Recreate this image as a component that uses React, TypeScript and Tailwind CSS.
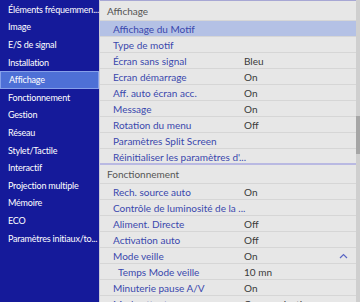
import React from "react";

const left = [
  "Éléments fréquemmen...",
  "Image",
  "E/S de signal",
  "Installation",
  "Affichage",
  "Fonctionnement",
  "Gestion",
  "Réseau",
  "Stylet/Tactile",
  "Interactif",
  "Projection multiple",
  "Mémoire",
  "ECO",
  "Paramètres initiaux/to...",
];

type Row = { l: string; v?: string; hl?: boolean; indent?: boolean; chev?: boolean };

const sec1: Row[] = [
  { l: "Affichage du Motif", hl: true },
  { l: "Type de motif" },
  { l: "Écran sans signal", v: "Bleu" },
  { l: "Ecran démarrage", v: "On" },
  { l: "Aff. auto écran acc.", v: "On" },
  { l: "Message", v: "On" },
  { l: "Rotation du menu", v: "Off" },
  { l: "Paramètres Split Screen" },
  { l: "Réinitialiser les paramètres d'..." },
];

const sec2: Row[] = [
  { l: "Rech. source auto", v: "On" },
  { l: "Contrôle de luminosité de la ..." },
  { l: "Aliment. Directe", v: "Off" },
  { l: "Activation auto", v: "Off" },
  { l: "Mode veille", v: "On", chev: true },
  { l: "Temps Mode veille", v: "10 mn", indent: true },
  { l: "Minuterie pause A/V", v: "On" },
  { l: "Mode attente", v: "Communication..." },
];

function RowItem({ r }: { r: Row }) {
  return (
    <div
      className={`flex items-center h-[16px] border-b border-[#d6d6d6] shrink-0 ${
        r.hl ? "bg-[#b4c1e5]" : ""
      }`}
    >
      <div
        className={`w-[144px] shrink-0 text-[#3a47ad] whitespace-nowrap ${
          r.indent ? "pl-[18px]" : "pl-[13px]"
        }`}
      >
        {r.l}
      </div>
      <div className="flex-1 text-[#3a3a3a] whitespace-nowrap">{r.v}</div>
      {r.chev && (
        <svg width="9" height="6" viewBox="0 0 9 6" className="mr-[8px]">
          <path d="M1 5 L4.5 1.5 L8 5" stroke="#5b67c4" strokeWidth="1.2" fill="none" />
        </svg>
      )}
    </div>
  );
}

export default function App() {
  return (
    <div
      className="w-[360px] h-[302px] flex overflow-hidden text-[10px] leading-[14px]"
      style={{ fontFamily: 'Lato, "Open Sans", sans-serif' }}
    >
      <div className="w-[99px] shrink-0 bg-[#151a9a] pt-[1px] flex flex-col overflow-hidden text-[9px] tracking-[-0.2px]">
        {left.map((t) => (
          <div
            key={t}
            className={`h-[17.6px] shrink-0 flex items-center pl-[8px] whitespace-nowrap overflow-hidden text-white ${
              t === "Affichage" ? "bg-[#4e70d6] border border-[#86a0ea] pl-[7px]" : ""
            }`}
          >
            {t}
          </div>
        ))}
      </div>
      <div className="w-[1px] bg-[#c9c9d6]" />
      <div className="flex-1 flex bg-[#e7e7e7]">
        <div className="flex-1 flex flex-col border-t border-[#a7a7d4] overflow-hidden">
          <div className="h-[20px] shrink-0 flex items-center pl-[7px] text-[#555] border-b border-[#d6d6d6]">
            Affichage
          </div>
          {sec1.map((r) => (
            <RowItem key={r.l} r={r} />
          ))}
          <div className="h-[2px] shrink-0 bg-[#b9b9e2] -mt-[2px]" />
          <div className="h-[19px] shrink-0 flex items-center pl-[7px] text-[#555] border-b border-[#d6d6d6]">
            Fonctionnement
          </div>
          {sec2.map((r) => (
            <RowItem key={r.l} r={r} />
          ))}
        </div>
        <div className="w-[4px] shrink-0 bg-[#cfcfcf] flex flex-col">
          <div className="h-[116px] shrink-0" />
          <div className="h-[38px] shrink-0 bg-[#a6a6a6]" />
        </div>
      </div>
    </div>
  );
}
